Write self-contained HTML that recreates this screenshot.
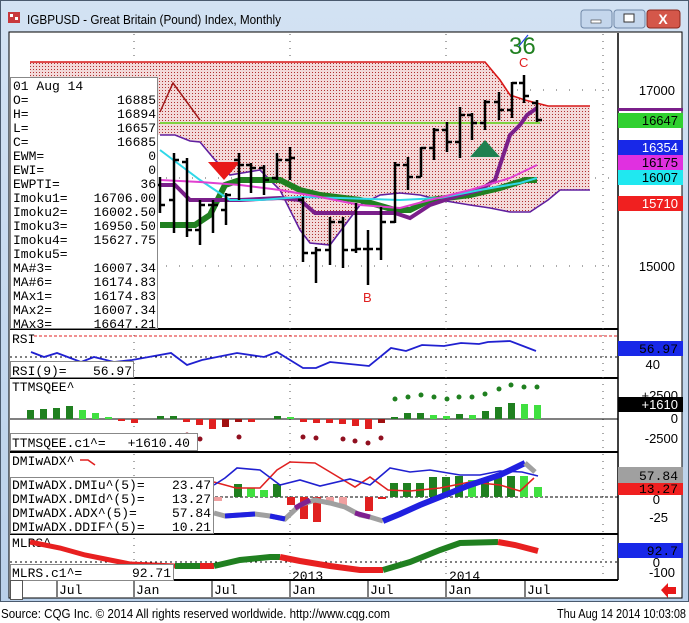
<!DOCTYPE html>
<html><head><meta charset="utf-8"><style>
html,body{margin:0;padding:0;width:689px;height:623px;overflow:hidden;background:#fff}
svg{display:block}
.m{font-family:"Liberation Mono",monospace;font-size:13px;fill:#000}
.s{font-family:"Liberation Sans",sans-serif;font-size:13px}
</style></head><body>
<svg width="689" height="623" viewBox="0 0 689 623" xmlns="http://www.w3.org/2000/svg">
<defs>
<linearGradient id="tb" x1="0" y1="0" x2="0" y2="1"><stop offset="0" stop-color="#d3e2f3"/><stop offset="1" stop-color="#b9d0ea"/></linearGradient>
<pattern id="dot" width="3" height="3" patternUnits="userSpaceOnUse"><rect width="3" height="3" fill="#f3dada"/><rect width="1" height="1" fill="#b03030"/></pattern>
</defs>
<rect x="0" y="0" width="689" height="602" fill="url(#tb)"/>
<rect x="0.5" y="0.5" width="688" height="601" fill="none" stroke="#4a5a6e"/>
<rect x="8" y="12" width="12" height="11" fill="#c8383c"/><rect x="10" y="14" width="3" height="3" fill="#fff"/><rect x="15" y="17" width="3" height="3" fill="#fff"/>
<text x="27" y="24" class="s" font-size="13" fill="#000" textLength="254" lengthAdjust="spacingAndGlyphs">IGBPUSD - Great Britain (Pound) Index, Monthly</text>
<rect x="581" y="10" width="31" height="18" rx="3" fill="#c4d6ec" stroke="#7088a8"/><rect x="591" y="20" width="10" height="3" fill="#fff" stroke="#333" stroke-width=".6"/>
<rect x="614" y="10" width="31" height="18" rx="3" fill="#c4d6ec" stroke="#7088a8"/><rect x="624" y="14" width="10" height="8" fill="#fff" stroke="#333"/>
<rect x="647" y="10" width="33" height="18" rx="3" fill="#d4574a" stroke="#8a2a20"/><text x="663" y="24" text-anchor="middle" font-family="Liberation Sans" font-weight="bold" font-size="14" fill="#fff">X</text>
<rect x="9" y="32" width="673" height="566" fill="#fff" stroke="#000"/>
<line x1="618" y1="33" x2="618" y2="580" stroke="#000" stroke-width="1.5"/>
<g stroke="#000" stroke-width="2"><line x1="10" y1="329" x2="618" y2="329"/><line x1="10" y1="378" x2="618" y2="378"/><line x1="10" y1="452" x2="618" y2="452"/><line x1="10" y1="534" x2="618" y2="534"/><line x1="10" y1="580" x2="618" y2="580"/></g>
<g stroke="#555" stroke-dasharray="1,6" stroke-width="1"><line x1="134" y1="34" x2="134" y2="580"/><line x1="290" y1="34" x2="290" y2="580"/><line x1="446" y1="34" x2="446" y2="580"/><line x1="603" y1="34" x2="603" y2="580"/>
<line x1="10" y1="90" x2="618" y2="90" stroke-dasharray="1,12"/><line x1="10" y1="266" x2="618" y2="266" stroke-dasharray="1,12"/><line x1="10" y1="178" x2="618" y2="178" stroke-dasharray="1,12"/></g>
<polygon points="30,62 485,62 500,80 510,95 525,100 548,106 590,106 590,190 575,190 560,190 548,200 530,212 510,212 490,208 470,205 440,200 420,195 400,193 380,195 360,205 345,225 330,245 310,243 300,230 280,190 260,170 230,175 215,160 200,142 190,141 175,135 160,135 30,135" fill="url(#dot)"/>
<polyline points="30,62 485,62 500,80 510,95 525,100 548,106 590,106" fill="none" stroke="#d81818" stroke-width="1.6"/>
<polyline points="160,135 175,135 190,141 200,142 215,160 230,175 260,170 280,190 300,230 310,243 330,245 345,225 360,205 380,195 400,193 420,195 440,200 470,205 490,208 510,212 530,212 548,200 560,190 575,190 590,190" fill="none" stroke="#6020a0" stroke-width="1.6"/>
<polyline points="160,112 173,83 200,120" fill="none" stroke="#a01818" stroke-width="1.5"/>
<line x1="160" y1="123" x2="540" y2="123" stroke="#80d040" stroke-width="2"/>
<polyline points="160,225 195,225 210,215 225,185 240,180 280,180 300,190 320,195 360,200 395,210 410,210 430,200 470,195 500,188 525,180 537,180" fill="none" stroke="#208020" stroke-width="6"/>
<polyline points="160,185 175,185 190,200 240,200 280,198 300,200 315,213 395,213 410,218 430,205 460,195 480,190 495,180 510,135 520,125 527,115 537,108" fill="none" stroke="#7a1f8a" stroke-width="4"/>
<polyline points="160,150 180,165 200,180 230,200 260,200 300,197 340,198 400,200 440,198 480,190 520,183 537,178" fill="none" stroke="#30d8e8" stroke-width="2"/>
<polyline points="160,180 200,182 240,185 280,190 320,197 360,205 400,208 430,200 470,190 510,178 537,165" fill="none" stroke="#e040d0" stroke-width="2"/>
<polygon points="208,162 240,162 224,180" fill="#e81818"/>
<polygon points="470,157 500,157 485,140" fill="#208050"/>
<g stroke="#000" stroke-width="2.5" fill="none">
<path d="M160 177V213M155 185h5M160 205h5"/><path d="M174 153V233M169 200h5M174 160h5"/><path d="M187 158V237M182 162h5M187 230h5"/><path d="M200 200V245M195 230h5M200 205h5"/><path d="M213 200V233M208 205h5M213 205h5"/><path d="M226 193V225M221 210h5M226 195h5"/><path d="M239 153V200M234 160h5M239 165h5"/><path d="M251 163V193M246 165h5M251 168h5"/><path d="M264 165V195M259 168h5M264 180h5"/><path d="M277 153V180M272 178h5M277 160h5"/><path d="M290 147V180M285 160h5M290 158h5"/><path d="M303 197V262M298 200h5M303 253h5"/><path d="M316 247V283M311 253h5M316 250h5"/><path d="M330 217V265M325 250h5M330 222h5"/><path d="M343 217V268M338 222h5M343 250h5"/><path d="M356 203V253M351 250h5M356 249h5"/><path d="M368 230V285M363 249h5M368 249h5"/><path d="M381 207V260M376 249h5M381 222h5"/><path d="M395 162V223M390 222h5M395 165h5"/><path d="M408 157V190M403 165h5M408 177h5"/><path d="M421 147V177M416 177h5M421 148h5"/><path d="M434 128V160M429 148h5M434 130h5"/><path d="M447 122V152M442 130h5M447 142h5"/><path d="M460 107V158M455 142h5M460 115h5"/><path d="M472 113V140M467 115h5M472 123h5"/><path d="M485 100V130M480 123h5M485 102h5"/><path d="M499 92V120M494 102h5M499 110h5"/><path d="M512 82V118M507 110h5M512 83h5"/><path d="M524 75V103M519 83h5M524 96h5"/><path d="M537 100V122M532 103h5M537 120h5"/>
</g>
<text x="509" y="54" font-family="Liberation Sans" font-size="24" fill="#208020">36</text>
<line x1="519" y1="46" x2="528" y2="35" stroke="#2040e0" stroke-width="1.2"/>
<text x="519" y="67" class="s" font-size="12" fill="#e02020">C</text>
<text x="363" y="302" class="s" font-size="12" fill="#e02020">B</text>
<rect x="10.5" y="77.5" width="147" height="251" fill="#fff" stroke="#888"/>
<g class="m">
<text x="13" y="90">01 Aug 14</text>
<text x="13" y="104">O=</text><text x="156" y="104" text-anchor="end">16885</text>
<text x="13" y="118">H=</text><text x="156" y="118" text-anchor="end">16894</text>
<text x="13" y="132">L=</text><text x="156" y="132" text-anchor="end">16657</text>
<text x="13" y="146">C=</text><text x="156" y="146" text-anchor="end">16685</text>
<text x="13" y="160">EWM=</text><text x="156" y="160" text-anchor="end">0</text>
<text x="13" y="174">EWI=</text><text x="156" y="174" text-anchor="end">0</text>
<text x="13" y="188">EWPTI=</text><text x="156" y="188" text-anchor="end">36</text>
<text x="13" y="202">Imoku1=</text><text x="156" y="202" text-anchor="end">16706.00</text>
<text x="13" y="216">Imoku2=</text><text x="156" y="216" text-anchor="end">16002.50</text>
<text x="13" y="230">Imoku3=</text><text x="156" y="230" text-anchor="end">16950.50</text>
<text x="13" y="244">Imoku4=</text><text x="156" y="244" text-anchor="end">15627.75</text>
<text x="13" y="258">Imoku5=</text>
<text x="13" y="272">MA#3=</text><text x="156" y="272" text-anchor="end">16007.34</text>
<text x="13" y="286">MA#6=</text><text x="156" y="286" text-anchor="end">16174.83</text>
<text x="13" y="300">MAx1=</text><text x="156" y="300" text-anchor="end">16174.83</text>
<text x="13" y="314">MAx2=</text><text x="156" y="314" text-anchor="end">16007.34</text>
<text x="13" y="328">MAx3=</text><text x="156" y="328" text-anchor="end">16647.21</text>
</g>
<g class="s" font-size="13"><text x="675" y="95" text-anchor="end">17000</text><text x="675" y="271" text-anchor="end">15000</text></g>
<rect x="618" y="108" width="65" height="3" fill="#7a1f8a"/>
<rect x="618" y="113" width="65" height="15" fill="#30d030"/><text x="678" y="125" text-anchor="end" class="s" fill="#000">16647</text>
<rect x="618" y="140" width="65" height="15" fill="#1828e8"/><text x="678" y="152" text-anchor="end" class="s" fill="#fff">16354</text>
<rect x="618" y="155" width="65" height="15" fill="#e030e0"/><text x="678" y="167" text-anchor="end" class="s" fill="#000">16175</text>
<rect x="618" y="170" width="65" height="15" fill="#20e8f0"/><text x="678" y="182" text-anchor="end" class="s" fill="#000">16007</text>
<rect x="618" y="196" width="65" height="15" fill="#f02020"/><text x="678" y="208" text-anchor="end" class="s" fill="#fff">15710</text>
<line x1="34" y1="336" x2="618" y2="336" stroke="#e02020" stroke-dasharray="3,2"/>
<line x1="10" y1="357" x2="618" y2="357" stroke="#000" stroke-dasharray="2,3"/>
<text x="12" y="343" class="m">RSI</text>
<polyline points="31,352 44,357 57,353 81,362 94,357 114,362 132,360 171,353 187,365 202,360 237,353 264,357 277,352 303,368 316,368 330,362 369,366 391,348 406,351 422,345 444,346 461,343 479,344 488,342 510,341 523,346 536,351" fill="none" stroke="#2020d0" stroke-width="1.8"/>
<rect x="10.5" y="361.5" width="123" height="16" fill="#fff" stroke="#888"/>
<text x="12" y="375" class="m">RSI(9)=</text><text x="132" y="375" class="m" text-anchor="end">56.97</text>
<rect x="618" y="341" width="65" height="15" fill="#1828e8"/><text x="678" y="353" text-anchor="end" class="m" fill="#fff">56.97</text>
<text x="660" y="369" text-anchor="end" class="s">40</text>
<text x="12" y="391" class="m">TTMSQEE^</text>
<line x1="10" y1="419" x2="618" y2="419" stroke="#000"/>
<g>
<rect x="27" y="410" width="7" height="9" fill="#208020"/><rect x="40" y="409" width="7" height="10" fill="#208020"/><rect x="53" y="408" width="7" height="11" fill="#208020"/><rect x="66" y="406" width="7" height="13" fill="#208020"/><rect x="79" y="410" width="7" height="9" fill="#40e040"/><rect x="92" y="413" width="7" height="6" fill="#40e040"/><rect x="105" y="417" width="7" height="2" fill="#40e040"/>
<rect x="118" y="419" width="7" height="2" fill="#e02020"/><rect x="131" y="419" width="7" height="4" fill="#e02020"/><rect x="157" y="416" width="7" height="3" fill="#208020"/><rect x="170" y="416" width="7" height="3" fill="#208020"/>
<rect x="183" y="419" width="7" height="3" fill="#e02020"/><rect x="196" y="419" width="7" height="6" fill="#e02020"/><rect x="209" y="419" width="7" height="10" fill="#e02020"/><rect x="222" y="419" width="7" height="8" fill="#a01010"/><rect x="235" y="419" width="7" height="3" fill="#a01010"/><rect x="248" y="419" width="7" height="3" fill="#e02020"/>
<rect x="274" y="416" width="7" height="3" fill="#208020"/><rect x="287" y="417" width="7" height="2" fill="#40e040"/>
<rect x="300" y="419" width="7" height="3" fill="#e02020"/><rect x="313" y="419" width="7" height="4" fill="#e02020"/><rect x="326" y="419" width="7" height="4" fill="#e02020"/><rect x="339" y="419" width="7" height="5" fill="#e02020"/><rect x="352" y="419" width="7" height="7" fill="#e02020"/><rect x="365" y="419" width="7" height="10" fill="#e02020"/><rect x="378" y="419" width="7" height="4" fill="#a01010"/>
<rect x="391" y="417" width="7" height="2" fill="#208020"/><rect x="404" y="413" width="7" height="6" fill="#208020"/><rect x="417" y="413" width="7" height="6" fill="#208020"/><rect x="430" y="415" width="7" height="4" fill="#40e040"/><rect x="443" y="416" width="7" height="3" fill="#40e040"/><rect x="456" y="414" width="7" height="5" fill="#208020"/><rect x="469" y="415" width="7" height="4" fill="#40e040"/><rect x="482" y="411" width="7" height="8" fill="#208020"/><rect x="495" y="407" width="7" height="12" fill="#208020"/><rect x="508" y="403" width="7" height="16" fill="#208020"/><rect x="521" y="404" width="7" height="15" fill="#40e040"/><rect x="534" y="405" width="7" height="14" fill="#40e040"/>
</g>
<g fill="#208020"><circle cx="395" cy="399" r="2.5"/><circle cx="408" cy="397" r="2.5"/><circle cx="421" cy="395" r="2.5"/><circle cx="434" cy="397" r="2.5"/><circle cx="447" cy="399" r="2.5"/><circle cx="459" cy="397" r="2.5"/><circle cx="472" cy="397" r="2.5"/><circle cx="485" cy="394" r="2.5"/><circle cx="499" cy="389" r="2.5"/><circle cx="511" cy="385" r="2.5"/><circle cx="524" cy="387" r="2.5"/><circle cx="537" cy="387" r="2.5"/></g>
<g fill="#901020"><circle cx="187" cy="435" r="2.5"/><circle cx="200" cy="439" r="2.5"/><circle cx="239" cy="437" r="2.5"/><circle cx="303" cy="437" r="2.5"/><circle cx="316" cy="438" r="2.5"/><circle cx="343" cy="439" r="2.5"/><circle cx="355" cy="441" r="2.5"/><circle cx="368" cy="443" r="2.5"/><circle cx="381" cy="438" r="2.5"/></g>
<rect x="10.5" y="433.5" width="187" height="17" fill="#fff" stroke="#888"/>
<text x="12" y="447" class="m">TTMSQEE.c1^=</text><text x="190" y="447" class="m" text-anchor="end">+1610.40</text>
<text x="678" y="400" text-anchor="end" class="s">+2500</text>
<rect x="618" y="397" width="65" height="15" fill="#000"/><text x="678" y="409" text-anchor="end" class="s" fill="#fff">+1610</text>
<text x="678" y="423" text-anchor="end" class="s">0</text><text x="678" y="443" text-anchor="end" class="s">-2500</text>
<text x="12" y="465" class="m">DMIwADX^</text>
<line x1="10" y1="497" x2="618" y2="497" stroke="#000" stroke-dasharray="3,2"/>
<g fill="#208020"><rect x="234" y="484" width="8" height="13"/><rect x="273" y="484" width="8" height="13"/><rect x="390" y="483" width="8" height="14"/><rect x="403" y="483" width="8" height="14"/><rect x="416" y="483" width="8" height="14"/><rect x="429" y="477" width="8" height="20"/><rect x="442" y="477" width="8" height="20"/><rect x="455" y="476" width="8" height="21"/><rect x="481" y="478" width="8" height="19"/><rect x="494" y="476" width="8" height="21"/><rect x="507" y="476" width="8" height="21"/></g>
<g fill="#40e040"><rect x="247" y="488" width="8" height="9"/><rect x="260" y="490" width="8" height="7"/><rect x="468" y="480" width="8" height="17"/><rect x="520" y="476" width="8" height="21"/><rect x="534" y="487" width="8" height="10"/></g>
<g fill="#e02020"><rect x="287" y="497" width="8" height="8"/><rect x="300" y="497" width="8" height="22"/><rect x="313" y="497" width="8" height="25"/><rect x="365" y="497" width="8" height="14"/><rect x="378" y="497" width="8" height="2"/></g>
<g fill="#f0a0a0"><rect x="326" y="497" width="8" height="8"/><rect x="339" y="497" width="8" height="8"/><rect x="214" y="497" width="8" height="4"/></g>
<polyline points="214,482 236,488 260,488 277,470 290,462 315,463 335,475 355,487 370,477 388,490 410,491 440,488 470,482 500,485 520,491 534,478" fill="none" stroke="#e02020" stroke-width="1.6"/>
<polyline points="80,460 88,460 95,465" fill="none" stroke="#e02020" stroke-width="1.6"/>
<polyline points="214,485 225,478 237,468 260,470 280,485 300,480 320,486 350,479 370,485 390,468 410,472 430,470 460,475 480,475 500,471 522,472 538,476" fill="none" stroke="#2020d0" stroke-width="1.6"/>
<polyline points="214,513 225,516 240,515 255,514 270,516 285,519 300,505 315,500 330,503 345,507 360,515 370,517 383,521" fill="none" stroke="#a0a0a0" stroke-width="5"/>
<polyline points="225,516 240,515 255,514" fill="none" stroke="#2020e0" stroke-width="5"/>
<polyline points="270,516 285,519" fill="none" stroke="#2020e0" stroke-width="5"/>
<polyline points="295,508 310,500" fill="none" stroke="#802090" stroke-width="5"/>
<polyline points="355,513 370,517" fill="none" stroke="#802090" stroke-width="5"/>
<polyline points="383,521 400,514 420,505 445,495 470,485 500,475 525,463" fill="none" stroke="#2020e0" stroke-width="6"/>
<polyline points="525,463 535,472" fill="none" stroke="#a0a0a0" stroke-width="5"/>
<rect x="10.5" y="477.5" width="203" height="56" fill="#fff" stroke="#888"/>
<g class="m"><text x="12" y="489">DMIwADX.DMIu^(5)=</text><text x="211" y="489" text-anchor="end">23.47</text>
<text x="12" y="503">DMIwADX.DMId^(5)=</text><text x="211" y="503" text-anchor="end">13.27</text>
<text x="12" y="517">DMIwADX.ADX^(5)=</text><text x="211" y="517" text-anchor="end">57.84</text>
<text x="12" y="531">DMIwADX.DDIF^(5)=</text><text x="211" y="531" text-anchor="end">10.21</text></g>
<rect x="618" y="467" width="65" height="16" fill="#a0a0a0"/><text x="678" y="480" text-anchor="end" class="m">57.84</text>
<rect x="618" y="483" width="65" height="12" fill="#f02020"/><text x="678" y="493" text-anchor="end" class="m" fill="#fff">13.27</text>
<text x="660" y="504" text-anchor="end" class="s">0</text><text x="668" y="522" text-anchor="end" class="s">-25</text>
<text x="12" y="547" class="m">MLRS^.</text>
<line x1="10" y1="562" x2="618" y2="562" stroke="#000" stroke-dasharray="2,3"/>
<polyline points="30,542 60,548 85,555 110,560 130,564 175,566" fill="none" stroke="#e82020" stroke-width="5"/>
<polyline points="175,566 200,566" fill="none" stroke="#208020" stroke-width="6"/>
<polyline points="200,566 214,566" fill="none" stroke="#e82020" stroke-width="6"/>
<polyline points="214,566 240,560 270,557 280,557" fill="none" stroke="#208020" stroke-width="6"/>
<polyline points="280,557 300,561 330,566 360,570 383,570" fill="none" stroke="#e82020" stroke-width="6"/>
<polyline points="383,570 410,562 440,550 460,543 498,542" fill="none" stroke="#208020" stroke-width="6"/>
<polyline points="498,542 515,545 538,551" fill="none" stroke="#e82020" stroke-width="6"/>
<rect x="10.5" y="564.5" width="163" height="16" fill="#fff" stroke="#888"/>
<text x="12" y="577" class="m">MLRS.c1^=</text><text x="171" y="577" class="m" text-anchor="end">92.71</text>
<text x="292" y="580" class="m">2013</text><text x="449" y="580" class="m">2014</text>
<rect x="618" y="543" width="65" height="15" fill="#1828e8"/><text x="678" y="555" text-anchor="end" class="m" fill="#fff">92.7</text>
<text x="660" y="567" text-anchor="end" class="s">0</text><text x="675" y="577" text-anchor="end" class="s">-100</text>
<rect x="10.5" y="580.5" width="12" height="19" fill="#fff" stroke="#555"/>
<g stroke="#000"><line x1="57" y1="581" x2="57" y2="597"/><line x1="134" y1="581" x2="134" y2="597"/><line x1="212" y1="581" x2="212" y2="597"/><line x1="290" y1="581" x2="290" y2="597"/><line x1="368" y1="581" x2="368" y2="597"/><line x1="446" y1="581" x2="446" y2="597"/><line x1="525" y1="581" x2="525" y2="597"/></g>
<g class="m"><text x="59" y="594">Jul</text><text x="136" y="594">Jan</text><text x="214" y="594">Jul</text><text x="292" y="594">Jan</text><text x="370" y="594">Jul</text><text x="448" y="594">Jan</text><text x="527" y="594">Jul</text></g>
<polygon points="661,590 668,583 668,587 676,587 676,594 668,594 668,598" fill="#e81818"/>
<rect x="0" y="602" width="689" height="21" fill="#fff"/>
<text x="1" y="618" class="s" font-size="12" fill="#000" textLength="389" lengthAdjust="spacingAndGlyphs">Source: CQG Inc. © 2014 All rights reserved worldwide. http://www.cqg.com</text>
<text x="557" y="618" class="s" font-size="12" fill="#000" textLength="129" lengthAdjust="spacingAndGlyphs">Thu Aug 14 2014 10:03:08</text>
</svg>
</body></html>
